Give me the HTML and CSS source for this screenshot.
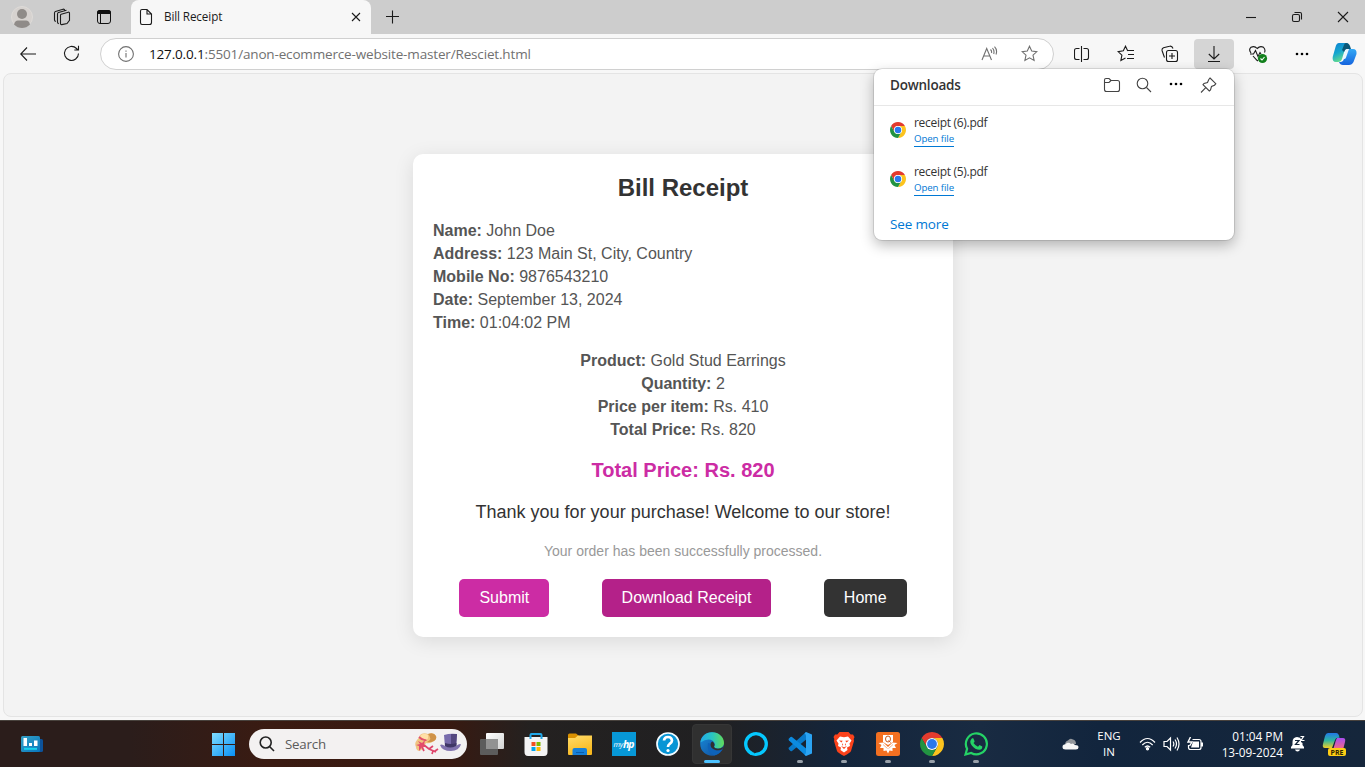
FILE: index.html
```html
<!DOCTYPE html>
<html lang="en">
<head>
<meta charset="utf-8">
<title>Bill Receipt</title>
<link rel="stylesheet" href="styles.css">
</head>
<body>
<svg class="defs" width="0" height="0">
  <symbol id="chrome" viewBox="0 0 24 24">
    <path fill="#e33b2e" d="M1.61 6A12 12 0 0 1 22.39 6H12A6 6 0 0 0 6.8 15Z"/>
    <path fill="#fcc31e" d="M22.39 6A12 12 0 0 1 12 24L17.2 15A6 6 0 0 0 12 6Z"/>
    <path fill="#229342" d="M12 24A12 12 0 0 1 1.61 6L6.8 15A6 6 0 0 0 17.2 15Z"/>
    <circle cx="12" cy="12" r="6" fill="#fff"/><circle cx="12" cy="12" r="4.900" fill="#2a78ee"/>
  </symbol>
</svg>
<div class="browser">
  <header class="tabs">
    <div class="profile"><svg width="22" height="22" viewBox="0 0 22 22"><circle cx="11" cy="11" r="10.5" fill="#d6d2cf" stroke="#dedbd8"/><circle cx="11" cy="8" r="5" fill="#8f8b88"/><path d="M3 18.5Q4 14.500 7 14.500H15Q18 14.500 19 18.500Q15.500 22 11 22T3 18.500Z" fill="#8f8b88"/></svg></div>
    <div class="tabtool"><svg class="line" width="18" height="18" viewBox="0 0 18 18"><path d="M8.200 6.200L15.300 4.200Q16.500 4 16.500 5.200V12.300L14 15.500L8.800 16.600Q7.500 16.800 7.500 15.500V7.300Q7.500 6.400 8.200 6.200Z"/><path d="M5.800 15.600Q4.500 15.300 4.500 14.200V6Q4.500 4.800 5.500 4.500L13.500 2.300M2.800 13.500Q1.500 13 1.500 12V5Q1.500 3.800 2.500 3.500L10 1.200Q11.500 1 11.800 2.300"/></svg></div>
    <div class="tabtool tabtool-actions"><svg width="16" height="16" viewBox="0 0 16 16"><rect x="1.500" y="1.500" width="13" height="13" rx="2.500" fill="none" stroke="#111"/><path d="M1 5V3.500Q1 1 3.500 1H12.500Q15 1 15 3.500V5Z" fill="#111"/><path d="M4.500 5V14" stroke="#111"/></svg></div>
    <div class="tab">
      <svg class="line" width="14" height="18" viewBox="0 0 14 18"><path d="M3 1.500H8L12.500 6V14.500Q12.500 16.500 10.500 16.500H3Q1.500 16.500 1.500 14.500V3Q1.500 1.500 3 1.500ZM8 1.500V6H12.500"/></svg>
      <span class="tab-title">Bill Receipt</span>
      <svg class="line tab-close" width="10" height="10" viewBox="0 0 10 10"><path d="M1 1L9 9M9 1L1 9"/></svg>
    </div>
    <svg class="line newtab" width="14" height="14" viewBox="0 0 14 14"><path d="M6.500 .5V13.500M0 6.500H13"/></svg>
    <div class="window-controls">
      <svg class="line" width="46" height="34"><path d="M18 17.500H28"/></svg>
      <svg class="line" width="46" height="34"><rect x="18.500" y="14.500" width="7" height="7" rx="1.500"/><path d="M20.500 12.500H26Q27.500 12.500 27.500 14V19.500"/></svg>
      <svg class="line" width="45" height="34"><path d="M18 12L28 22M28 12L18 22"/></svg>
    </div>
  </header>
  <nav class="toolbar">
    <svg class="line back" width="16" height="14" viewBox="0 0 16 14"><path d="M16 7H1M7 .5L.7 7L7 13.500"/></svg>
    <svg class="line reload" width="17" height="17" viewBox="0 0 17 17"><path d="M15.500 8.500A7 7 0 1 1 13.500 3.500L15 5M15.500 .8V5H11.300"/></svg>
    <div class="address">
      <svg class="line muted" width="16" height="16" viewBox="0 0 16 16"><circle cx="8" cy="8" r="7.400"/><path d="M8 7V11.500M8 4.500V5.700"/></svg>
      <span class="url"><b>127.0.0.1</b>:5501/anon-ecommerce-website-master/Resciet.html</span>
      <svg class="line muted aloud" width="17" height="16" viewBox="0 0 17 16"><path d="M1 14L5.700 2.500L10.500 14M2.600 10H8.900M9.500 3.500Q11 5 10.500 7M11.500 2Q13.700 4.500 12.700 8M13.500 .7Q16.700 4 15 8.500"/></svg>
      <svg class="line muted" width="17" height="17" viewBox="0 0 17 17"><path d="M8.500 1.200L10.700 6L15.900 6.600L12 10.100L13.100 15.400L8.500 12.800L3.900 15.400L5 10.100L1.100 6.600L6.300 6Z"/></svg>
    </div>
    <div class="actions">
      <span class="action"><svg class="line" width="16" height="16" viewBox="0 0 16 16"><path d="M5.500 2.500H2.500Q.5 2.500 .5 4.500V11.500Q.5 13.500 2.500 13.500H5.500M9.500 2.500H12.500Q14.500 2.500 14.500 4.500V11.500Q14.500 13.500 12.500 13.500H9.500M7.500 0V16"/></svg></span>
      <span class="action"><svg class="line" width="18" height="17" viewBox="0 0 18 17"><path d="M10.800 6L8.500 1.200L6.300 5.800L1.100 6.600L4.900 10.200L3.900 15.400L8.500 12.900M8.500 1.200L10.500 5.500H17M11 9.500H17M10 13.500H17"/></svg></span>
      <span class="action"><svg class="line" width="18" height="18" viewBox="0 0 18 18"><rect x="5.500" y="5.500" width="11" height="11" rx="2"/><path d="M11 8V14M8 11H14M3.500 12.500L1.200 6Q.5 3.500 2.500 2.700L8.500 1.200Q11 .5 12 3.500"/></svg></span>
      <span class="action active"><svg class="line" width="14" height="18" viewBox="0 0 14 18"><path d="M7 1V14M1.800 9L7 14L12.200 9M1 16.500H13"/></svg></span>
      <span class="action"><svg class="line" width="20" height="20" viewBox="0 0 20 20"><path d="M10 17L8 15.500M3 9Q.3 5.500 3 3.300Q6.500 1.500 9.200 4.500Q12 1.500 15.500 3.300Q17.800 5.500 16.500 8.500M2 10H5.500L7.500 6.500L10 12.500L12 8.500L13 10M5 12L8.500 15.800"/><circle cx="14.500" cy="14.500" r="4.600" fill="#12801c" stroke="none"/><path d="M12.500 14.500L14 16L16.500 13" stroke="#fff"/></svg></span>
      <span class="action"><svg width="14" height="4"><circle cx="2" cy="2" r="1.300"/><circle cx="7" cy="2" r="1.300"/><circle cx="12" cy="2" r="1.300"/></svg></span>
    </div>
    <svg class="copilot" width="25" height="24" viewBox="0 0 25 24">
      <defs><linearGradient id="cp1" x2=".4" y2="1"><stop stop-color="#0c80d1"/><stop offset=".55" stop-color="#16a7cf"/><stop offset="1" stop-color="#65dc8d"/></linearGradient><linearGradient id="cp2" x2="0" y2="1"><stop stop-color="#34a9f5"/><stop offset="1" stop-color="#1664de"/></linearGradient></defs>
      <path fill="url(#cp1)" d="M7 1H16L13 7L10 17Q9 20 6 20H4Q0 20 .7 15L3.500 5Q4.500 1 7 1Z"/><path fill="#0a5878" d="M14 1Q17 1 18 4L19 7H15Q13 7 12 10L10 8L12 3Q12.500 1 14 1Z"/>
      <path fill="url(#cp2)" d="M17 7H21Q25 7 24.500 12L21.500 20Q20 23 17 23H11Q8 23 7 20H9Q11 20 12 17L15 8Z"/>
      <path fill="#e9f7ff" d="M14.500 7H17L14 15.500Q13.500 17 12 17H10.700Z"/>
    </svg>
  </nav>
  <main class="viewport">
    <section class="receipt">
      <h2>Bill Receipt</h2>
      <div class="details">
        <div><strong>Name:</strong> John Doe</div>
        <div><strong>Address:</strong> 123 Main St, City, Country</div>
        <div><strong>Mobile No:</strong> 9876543210</div>
        <div><strong>Date:</strong> September 13, 2024</div>
        <div><strong>Time:</strong> 01:04:02 PM</div>
      </div>
      <div class="details product">
        <div><strong>Product:</strong> Gold Stud Earrings</div>
        <div><strong>Quantity:</strong> 2</div>
        <div><strong>Price per item:</strong> Rs. 410</div>
        <div><strong>Total Price:</strong> Rs. 820</div>
      </div>
      <div class="total">Total Price: Rs. 820</div>
      <div class="thanks">Thank you for your purchase! Welcome to our store!</div>
      <div class="note">Your order has been successfully processed.</div>
      <div class="buttons">
        <button class="btn submit">Submit</button>
        <button class="btn download">Download Receipt</button>
        <button class="btn home">Home</button>
      </div>
    </section>
  </main>
  <aside class="downloads">
    <div class="downloads-head">
      <span class="downloads-title">Downloads</span>
      <svg class="line" width="18" height="16" viewBox="0 0 18 16"><path d="M1.500 4V3Q1.500 1.500 3 1.500H6L8 3.500H14.500Q16.500 3.500 16.500 5.500V12.500Q16.500 14.500 14.500 14.500H3.500Q1.500 14.500 1.500 12.500ZM1.500 5.500H6L8 3.500"/></svg>
      <svg class="line" width="16" height="16" viewBox="0 0 16 16"><circle cx="6.500" cy="6.500" r="5.300"/><path d="M10.500 10.500L15 15"/></svg>
      <svg class="dots" width="14" height="6"><circle cx="2" cy="2" r="1.300"/><circle cx="7" cy="2" r="1.300"/><circle cx="12" cy="2" r="1.300"/></svg>
      <svg class="line" width="17" height="17" viewBox="0 0 17 17"><path d="M10 1L15.800 6.700L14.500 8.200L11.500 9.500L10.500 13L9.300 14L3 7.700L4 6.500L7.500 5.500L8.800 2.500ZM5.500 10.800L1 15.500"/></svg>
    </div>
    <div class="file"><svg width="16" height="16"><use href="#chrome"/></svg><div><div class="file-name">receipt (6).pdf</div><span class="open">Open file</span></div></div>
    <div class="file"><svg width="16" height="16"><use href="#chrome"/></svg><div><div class="file-name">receipt (5).pdf</div><span class="open">Open file</span></div></div>
    <div class="more">See more</div>
  </aside>
</div>
<footer class="taskbar">
  <div class="widgets"><svg width="22" height="16" viewBox="0 0 22 16"><defs><linearGradient id="wd" x2="1" y2="1"><stop stop-color="#35a2c7"/><stop offset="1" stop-color="#0876bd"/></linearGradient></defs><rect x="14" y="3" width="8" height="13" rx="1.500" fill="#0c529a"/><rect width="19" height="16" rx="1.500" fill="url(#wd)"/><path d="M2.500 2H6V10H2.500ZM8 7H11V10H8ZM13 4.500H16.500V10H13Z" fill="#fff"/><path d="M3 12.800H16" stroke="#16d2ee" stroke-width="2"/></svg></div>
  <div class="app"><svg width="24" height="24" viewBox="0 0 24 24"><defs><linearGradient id="wn" gradientUnits="userSpaceOnUse" x2="24" y2="24"><stop stop-color="#85e0ff"/><stop offset="1" stop-color="#0890f5"/></linearGradient></defs><path fill="url(#wn)" d="M1 1H12V12H1ZM13 1H24V12H13ZM1 13H12V24H1ZM13 13H24V24H13Z"/></svg></div>
  <div class="search">
    <svg width="16" height="16" viewBox="0 0 16 16" fill="none" stroke="#222" stroke-width="1.600"><circle cx="6.700" cy="6.500" r="5.500"/><path d="M10.500 10.500L15 15"/></svg>
    <span class="search-label">Search</span>
    <svg width="47" height="24" viewBox="0 0 47 24">
      <path d="M1 15Q-1 11 2 8Q4 6 5 3Q8 0 13 2Q19 0 21 4Q22 7 19 9Q15 12 11 11Q8 18 4 19Q1 18 1 15Z" fill="#f0c481"/>
      <path d="M13 2Q19 0 21 4Q22 7 19 9Q15 11 12 10Q18 7 13 2Z" fill="#cf9248"/><path d="M5 4Q9 0 13 3Q14 7 11 8Q7 7 5 4Z" fill="#ffe0a8"/>
      <path d="M4 5Q8 9 11.500 8" stroke="#e2506c" stroke-width="1.800" fill="none"/>
      <path d="M3 9L7 11L10 8L9 13L11 15L7 15L4 19L4 14L1 13L5 12Z" fill="#e34c6d"/><path d="M9 13L14 17L21 20M14 17L18 14M18 19L17 22M20 19L23 17M7 15L9 19" stroke="#df456b" stroke-width="1.700" fill="none"/>
      <path d="M29 3Q35 1 42 2L41 15Q35 18 30 15Z" fill="#786bab"/><path d="M36 2L42 2L41 15L36 16Z" fill="#55487f"/><path d="M30 11Q36 13 41.500 11V15Q36 18 30 15Z" fill="#403766"/><path d="M25 13Q27 11.500 30 14Q35 17 41 14Q45 11 46 12.500Q44 18.500 36 19Q27 19 25 13Z" fill="#8173ae"/>
    </svg>
  </div>
  <div class="app first"><svg width="26" height="24" viewBox="0 0 26 24"><defs><linearGradient id="tv" x2="1" y2="1"><stop stop-color="#fff"/><stop offset="1" stop-color="#d2d2d2"/></linearGradient></defs><rect x="7" y="1" width="18" height="16" rx="1" fill="url(#tv)"/><rect x="1" y="7" width="18" height="16" rx="1" fill="#5c5c5c"/><path d="M7 7H19V17H7Z" fill="#929292"/></svg></div>
  <div class="app"><svg width="24" height="24" viewBox="0 0 24 24"><path d="M.5 5H23.500V20Q23.500 24 20 24H4Q.5 24 .5 20Z" fill="#f4f4f4"/><path d="M6.500 7V3Q6.500 2 7.500 2H16.500Q17.500 2 17.500 3V7" fill="none" stroke="#22a8e8" stroke-width="2"/><path fill="#f25022" d="M7.500 10H11.500V14H7.500Z"/><path fill="#7fba00" d="M12.500 10H16.500V14H12.500Z"/><path fill="#00a4ef" d="M7.500 15H11.500V19H7.500Z"/><path fill="#ffb900" d="M12.500 15H16.500V19H12.500Z"/></svg></div>
  <div class="app"><svg width="24" height="24" viewBox="0 0 24 24"><defs><linearGradient id="fe" x2=".4" y2="1"><stop stop-color="#ffdc6b"/><stop offset="1" stop-color="#f9b91f"/></linearGradient></defs><path fill="#d99000" d="M0 3Q0 1.500 1.500 1.500H8L11 4V8H0Z"/><path fill="url(#fe)" d="M0 6H7L10 3.500H24V22Q24 23 23 23H1Q0 23 0 22Z"/><path fill="#1680d8" d="M4.500 23V18Q4.500 16 6.500 16H17Q19 16 19 18V23Z"/><path stroke="#0b5dab" d="M8 20.500H16"/></svg></div>
  <div class="app"><svg width="24" height="24"><rect width="24" height="24" fill="#0798d7"/><text class="hp-my" x="1.500" y="14.500">my</text><text class="hp" x="11" y="15.500">hp</text></svg></div>
  <div class="app"><svg width="24" height="24"><circle cx="12" cy="12" r="11" fill="#0795d5" stroke="#f2fbff" stroke-width="1.700"/><path d="M8 8.500Q8.300 5 12 5T16 8.500Q16 10.500 13.500 12Q12 13 12 15" fill="none" stroke="#fff" stroke-width="2.700"/><circle cx="12" cy="18.500" r="1.600" fill="#fff"/></svg></div>
  <div class="app current"><svg width="24" height="24" viewBox="0 0 24 24"><defs><linearGradient id="ed" x2="1"><stop stop-color="#22a9e8"/><stop offset=".5" stop-color="#29c5c2"/><stop offset="1" stop-color="#62dc59"/></linearGradient><linearGradient id="ed2" x2="1" y2="1"><stop stop-color="#178cdb"/><stop offset="1" stop-color="#124a98"/></linearGradient></defs><circle cx="12" cy="12" r="11.800" fill="url(#ed2)"/><path fill="#0d62b8" d="M8 11Q6 20 14 23.500Q19 22.500 22.300 17.500Q18 20 14 18Q9 16 10 11.500Z"/><path fill="url(#ed)" d="M.4 10.500C1 4 6 .2 12 .2C19 .2 24 5 24 11C24 14.500 21 16.500 18 16.500C15.500 16.500 13.800 15.500 14.200 14.500Q16 12 13 9Q8 5.500 .4 10.500Z"/><path fill="#303030" d="M12.500 9.500Q15.500 12 14 14.300Q14 16.500 18 16.700Q21 16.700 23 15L22.600 17Q19 19 15.500 18Q10 16.500 10.500 12Q11 9.500 12.500 9.500Z"/></svg><i class="run"></i></div>
  <div class="app"><svg width="24" height="24" viewBox="0 0 24 24"><circle cx="12" cy="12" r="10.300" fill="none" stroke="#05c8ff" stroke-width="3.300"/><path fill="#1b2024" d="M9.500 20.300Q11 20.300 11 24L7 24.500L8 21Z"/><path fill="#05c8ff" d="M4 19L9 20.500Q12 21.500 11.500 24Q6 23.500 3 19.500Z"/><path d="M10 20.300H12" stroke="#1b2024"/></svg></div>
  <div class="app"><svg width="24" height="24" viewBox="0 0 24 24"><path fill="#0879c9" d="M18 0L1 15.500Q0 16.500 1 17.500L2.500 19Q3.200 19.500 4 19L20 6Z"/><path fill="#0c8be0" d="M18 24L1 8.500Q0 7.500 1 6.500L2.500 5Q3.200 4.500 4 5L20 18Z"/><path fill="#2ba4f3" d="M18 0L24 2.500V21.500L18 24L16.500 22.500Q18 22 18 20V4Q18 2 16.500 1.500Z"/></svg><i class="run"></i></div>
  <div class="app"><svg width="24" height="24" viewBox="0 0 24 24"><path fill="#fb421b" d="M7.500 0H16.500L18.700 2.500L21 2.500L22.500 5L21.700 7L22 9L19 19Q18.500 20.500 12 24Q5.500 20.500 5 19L2 9L2.300 7L1.500 5L3 2.500H5.300Z"/><path fill="#fff" d="M8 4.500L12 5.300L16 4.500L19.500 8.500L17.500 11.500L18 14L15 15.500L15.500 18L12 20.500L8.500 18L9 15.500L6 14L6.500 11.500L4.500 8.500Z"/><path fill="#fb421b" d="M7 8.500L10.700 8.800L9.500 10.500ZM17 8.500L13.300 8.800L14.500 10.500ZM9 14L12 15.200L15 14L12 17ZM10.500 11L11.200 13L10 13.500ZM13.500 11L12.800 13L14 13.500Z"/></svg><i class="run"></i></div>
  <div class="app"><svg width="24" height="24" viewBox="0 0 24 24"><rect width="24" height="24" rx="2.500" fill="#f37021"/><path d="M7 3H17V10L12 13L7 10Z" fill="#fff"/><ellipse cx="12" cy="7" rx="2.500" ry="3" stroke="#c75b20" stroke-width="1" fill="none"/><path d="M12.500 8.500L14.500 10.500" stroke="#c75b20"/><path d="M2.500 11L7.500 10.500L12 15L16.500 10.500L21.500 11L18.500 13L20 16L16.500 16L16.500 19L13.500 18.500L12 21.500L10.500 18.500L7.500 19V16L4 16L5.500 13Z" fill="#fff"/><path d="M7 12.500L11.500 16.500M17 12.500L12.500 16.500" stroke="#f6a16d" stroke-width=".8" fill="none"/></svg><i class="run"></i></div>
  <div class="app"><svg width="24" height="24"><use href="#chrome"/></svg><i class="run"></i></div>
  <div class="app"><svg width="24" height="24" viewBox="0 0 24 24"><path fill="none" stroke="#25d366" stroke-width="2.200" d="M1.500 22.500L3.100 16.800A10.500 10.500 0 1 1 7.200 21Z"/><path fill="#25d366" d="M8 6.200H9.300L10.600 9.300Q10.500 10.200 9.500 11Q11.500 14 14 14.700L15.500 13L18.300 14.400Q18.300 17.500 15.500 17.800Q11 17.700 7.800 13.500Q4.600 9.500 8 6.200Z"/></svg><i class="run"></i></div>
  <div class="tray">
    <svg width="17" height="12" viewBox="0 0 17 12"><path fill="#92969b" d="M3 7Q3 3 6 2.500Q8 -.5 11 1.500Q14 2 14 6Z"/><path fill="#f6f6f6" d="M3.500 11.500Q.5 11.500 .5 9T3.500 6.300Q6 3.500 9 6Q11 4.500 13 7Q16.500 7 16.500 9.300Q16.500 11.500 14 11.500Z"/></svg>
    <div class="lang">ENG<br>IN</div>
    <svg class="white wifi" width="17" height="14" viewBox="0 0 17 14"><path d="M1 5.500Q8.500 -2.500 16 5.500M3.300 8Q8.500 2.500 13.700 8M5.800 10.300Q8.500 7.700 11.200 10.300"/><circle cx="8.500" cy="11.800" r="1.100" fill="#fff"/></svg>
    <svg class="white vol" width="17" height="16" viewBox="0 0 17 16"><path d="M1 5.500H4L7.500 2V14L4 10.500H1ZM10 5.500Q11.700 8 10 10.500M12 3.500Q15 8 12 12.500M14 1.500Q18 8 14 14.500"/></svg>
    <svg class="white bat" width="17" height="14" viewBox="0 0 17 14"><path d="M5.500 2.500H12Q14 2.500 14 4.500V10.500Q14 12.500 12 12.500H3.500Q1.500 12.500 1.500 10.500V8"/><path fill="#fff" stroke="none" d="M6 4.500H12V10.500H4ZM14 5.500H16V9.500H14Z"/><path d="M3.500 0L1 5H5L2.500 9" stroke-width="1.400"/></svg>
    <div class="clock">01:04 PM<br>13-09-2024</div>
    <svg class="bell" width="16" height="18" viewBox="0 0 16 18"><path fill="#fff" d="M7 2Q2.500 2.500 2.500 7V10L1 12V13.500H14V12L12.500 10V8L11 7V3ZM5 14.500H10Q9.500 16.500 7.500 16.500T5 14.500Z"/><path stroke="#15263b" stroke-width="3" d="M10.500 2.500H14"/><path stroke="#fff" stroke-width="1.200" fill="none" d="M10.500 1.500H13.500L11 5.500H14.500"/><path stroke="#15263b" stroke-width="1.200" fill="none" d="M5 5.500H9L5.500 9.500H9.500"/></svg>
    <svg class="copilot-pre" width="24" height="24" viewBox="0 0 24 24"><defs><linearGradient id="cq" x2="0" y2="1"><stop stop-color="#2178e8"/><stop offset=".5" stop-color="#2fb79f"/><stop offset="1" stop-color="#f2cf25"/></linearGradient><linearGradient id="cr" x2="0" y2="1"><stop stop-color="#a74df1"/><stop offset="1" stop-color="#fb6c78"/></linearGradient></defs><path fill="url(#cq)" d="M6 1H14Q17 1 17.500 6Q14 5 13 8L10 16H3Q0 16 1 12L3 4Q4 1 6 1Z"/><path fill="url(#cr)" d="M15 6H21Q24 6 23 10L21 18H11L14 8Z"/><rect x="6" y="16" width="18" height="8" rx="2" fill="#ffce15"/><text class="pre" x="15" y="22.500" text-anchor="middle">PRE</text></svg>
  </div>
</footer>
</body>
</html>
```
FILE: styles.css
```css
* { box-sizing: border-box; }
body {
  margin: 0;
  width: 1365px;
  height: 767px;
  overflow: hidden;
  display: flex;
  flex-direction: column;
  font-family: "Open Sans", "Noto Sans", sans-serif;
  background: #f7f7f7;
}
svg { display: block; flex: none; }
.defs { position: absolute; }
.line { fill: none; stroke: #1b1b1b; stroke-width: 1.1; }
.muted { stroke: #707070; }
.browser { height: 720px; display: flex; flex-direction: column; position: relative; }

.tabs { height: 34px; background: #cdcdcd; display: flex; align-items: center; }
.profile { width: 22px; margin-left: 11px; }
.tabtool { margin-left: 20px; }
.tabtool-actions { margin-left: 25px; }
.tab {
  width: 240px; height: 34px; margin-left: 19px; padding: 0 10px 0 8px;
  display: flex; align-items: center;
  background: #f7f7f7; border-radius: 8px 8px 0 0;
}
.tab-title { margin-left: 11px; padding-bottom: 2px; font-size: 11.7px; letter-spacing: -0.12px; color: #1b1b1b; }
.tab-close { margin-left: auto; }
.newtab { margin-left: 15px; }
.window-controls { display: flex; margin-left: auto; }

.toolbar { height: 39px; display: flex; align-items: center; background: #f7f7f7; }
.back { margin-left: 20px; }
.reload { margin-left: 27px; }
.address {
  width: 954px; height: 32px; margin-left: 20px; padding: 0 15px 0 17px;
  display: flex; align-items: center;
  background: #fff; border: 1px solid #d0d0d0; border-radius: 16px;
}
.url { margin-left: 15px; font-size: 13.5px; letter-spacing: -0.16px; color: #717171; }
.url b { font-weight: 400; color: #111; }
.aloud { margin-left: auto; margin-right: 23px; }
.actions { display: flex; gap: 4px; margin-left: 8px; }
.action { width: 40px; height: 30px; display: flex; align-items: center; justify-content: center; border-radius: 4px; }
.active { background: #d5d5d5; }
.copilot { margin-left: 10px; }

.viewport {
  height: 644px; margin: 0 2px 0 3px;
  display: flex; align-items: center; justify-content: center;
  background: #f3f3f3; border: 1px solid #e4e4e4; border-radius: 8px;
}
.receipt {
  width: 540px; height: 483px; margin-top: 1px; padding: 20px;
  background: #fff; border-radius: 10px; box-shadow: 0 4px 20px rgba(0, 0, 0, 0.1);
  font-family: "Liberation Sans", Arial, sans-serif;
  text-align: center; color: #333;
}
.receipt h2 { margin: 0 0 17px; font-size: 24px; line-height: 28px; }
.details { font-size: 16px; line-height: 23px; color: #555; text-align: left; }
.product { margin-top: 15px; text-align: center; }
.total { margin-top: 18px; font-size: 20px; line-height: 23px; font-weight: 700; color: #cc2ca4; }
.thanks { margin-top: 20px; font-size: 18px; line-height: 21px; }
.note { margin-top: 20px; font-size: 14px; line-height: 16px; color: #999; }
.buttons { margin-top: 20px; display: flex; justify-content: space-around; }
.btn {
  height: 38px; padding: 0 20px; border: 0; border-radius: 5px;
  font: 16px "Liberation Sans", Arial, sans-serif; color: #fff;
}
.submit { background: #cc2ca4; }
.download { padding: 0 19.5px; background: #b42189; }
.home { background: #333; }

.downloads {
  position: absolute; left: 874px; top: 69px; width: 360px; height: 171px;
  background: #fff; border-radius: 8px;
  box-shadow: 0 0 0 1px rgba(0, 0, 0, 0.1), 0 5px 14px rgba(0, 0, 0, 0.28);
  color: #333;
}
.downloads-head {
  height: 37px; padding: 0 17px 4px 16px;
  display: flex; align-items: center; gap: 16px;
  border-bottom: 1px solid #e7e7e7;
}
.downloads-head .line { stroke: #444; }
.downloads-head .dots { margin-left: 1px; margin-right: 1px; }
.downloads-title { margin-right: auto; font-size: 13.5px; font-weight: 600; letter-spacing: -0.22px; }
.downloads-head svg:nth-child(3) { margin-left: -1px; }
.file { height: 49px; padding: 8px 16px 0; display: flex; gap: 8px; }
.file > svg { margin-top: 8px; }
.file-name { font-size: 12px; line-height: 18px; letter-spacing: -0.3px; }
.open {
  display: block; width: 40px; height: 15px; border-bottom: 1px solid #0078d4;
  font-size: 9.7px; line-height: 13px; letter-spacing: -0.1px; color: #0078d4; white-space: nowrap;
}
.more { padding: 10px 16px; font-size: 13.5px; line-height: 20px; letter-spacing: -0.15px; color: #0078d4; }

.taskbar {
  height: 47px; display: flex; align-items: center;
  border-top: 1px solid #48423d;
  background: linear-gradient(90deg, #2b1d1b 0, #2b1d1b 130px, #3a1b12 270px, #391910 445px, #242120 530px, #202022 720px, #14253b 840px, #192b42 980px, #12253d 1100px, #15263b 1365px);
}
.widgets { width: 201px; padding-left: 21px; }
.app { width: 44px; height: 40px; position: relative; display: flex; align-items: center; justify-content: center; }
.first { margin-left: 3px; }
.current { width: 40px; margin: 0 2px; background: #303030; border: 1px solid #363636; border-radius: 4px; }
.run { position: absolute; bottom: 1px; left: 19px; width: 6px; height: 3px; border-radius: 2px; background: #98a0a9; }
.current .run { left: 11px; bottom: 0; width: 16px; background: #4cc2ff; }
.search {
  width: 218px; height: 30px; margin-left: 4px; padding: 0 5px 0 10px;
  display: flex; align-items: center;
  background: #f3f1f1; border-radius: 15px;
}
.search-label { margin-left: 10px; margin-right: auto; font-size: 13.3px; letter-spacing: -0.2px; color: #5b5b5b; }
.hp, .hp-my { font-family: "Open Sans", sans-serif; font-style: italic; fill: #fff; }
.hp { font-size: 10.5px; font-weight: 700; letter-spacing: -1px; }
.hp-my { font-size: 7.5px; letter-spacing: -0.4px; }
.tray { margin-left: auto; display: flex; align-items: center; padding-right: 19px; }
.white { fill: none; stroke: #fff; stroke-width: 1.2; }
.lang, .clock { color: #fff; font-size: 11.5px; line-height: 16px; }
.lang { width: 36px; margin-left: 12px; text-align: center; }
.wifi { margin-left: 12px; }
.vol { margin-left: 7px; }
.bat { margin-left: 7px; }
.clock { width: 72px; margin-left: 7px; text-align: right; font-size: 11.8px; letter-spacing: -0.02px; white-space: nowrap; }
.bell { margin-left: 7px; }
.copilot-pre { margin-left: 16px; }
.pre { font: 700 7px "Open Sans", sans-serif; fill: #302600; }
```
